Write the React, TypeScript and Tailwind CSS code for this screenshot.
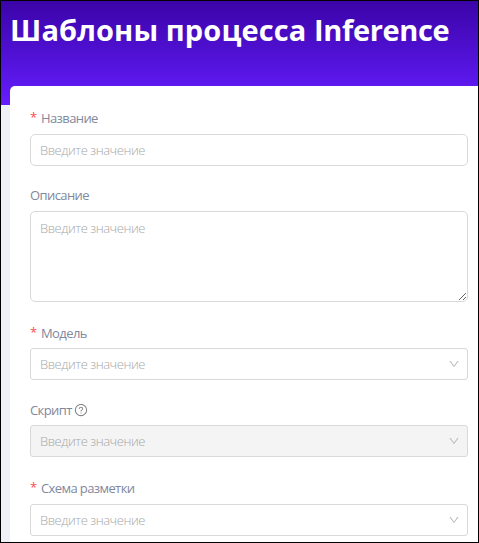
import type { ReactNode } from 'react';
import { AiOutlineDown, AiOutlineQuestionCircle } from 'react-icons/ai';

const PLACEHOLDER = 'Введите значение';

function Label({ text, required, icon }: { text: string; required?: boolean; icon?: ReactNode }) {
  return (
    <div className="flex h-8 items-center pt-[2px] text-[13px] tracking-[-0.6px] text-[#7f889c]">
      {required && <span className="mr-1 mb-[2px] w-[7px] text-[13px] text-[#ff4d4f]">*</span>}
      <span>{text}</span>
      {icon}
    </div>
  );
}

function Select({ disabled }: { disabled?: boolean }) {
  return (
    <div
      className={`flex h-8 items-center justify-between rounded-[3px] border border-[#d9d9d9] pt-px pr-[7px] pl-[9px] text-[13px] font-light tracking-[-0.45px] text-[#a8a8a8] ${
        disabled ? 'bg-[#f4f4f4]' : 'bg-white'
      }`}
    >
      <span>{PLACEHOLDER}</span>
      <AiOutlineDown className="mb-px size-3 text-[#b8b8b8]" />
    </div>
  );
}

export default function App() {
  return (
    <div className="flex h-[543px] w-[479px] flex-col overflow-hidden border border-black bg-[#f0f1f7] font-['Open_Sans','Noto_Sans',sans-serif]">
      <header className="h-[104px] shrink-0 bg-linear-to-b from-[#3b04a8] to-[#651dff] pt-[9px] pl-[9px]">
        <h1 className="text-[29px] leading-10 font-bold whitespace-nowrap text-white">
          <span className="tracking-[0.12px]">Шаблоны процесса </span>
          <span className="tracking-[-0.35px]">Inference</span>
        </h1>
      </header>
      <main className="relative -mt-[19px] ml-[9px] h-[480px] shrink-0 rounded-tl-[5px] bg-white pt-4 pr-[10px] pl-5">
        <section>
          <Label text="Название" required />
          <input
            className="block h-8 w-full rounded-[5px] border border-[#d9d9d9] px-[9px] text-[13px] font-light tracking-[-0.45px] outline-none placeholder:text-[#a8a8a8]"
            placeholder={PLACEHOLDER}
          />
        </section>
        <section className="mt-[13px]">
          <Label text="Описание" />
          <textarea
            className="block h-[91px] w-full rounded-[5px] border border-[#d9d9d9] px-[9px] py-[5px] text-[13px] leading-[22px] font-light tracking-[-0.45px] outline-none placeholder:text-[#a8a8a8]"
            placeholder={PLACEHOLDER}
          />
        </section>
        <section className="mt-[15px]">
          <Label text="Модель" required />
          <div className="-mt-px">
            <Select />
          </div>
        </section>
        <section className="mt-[14px]">
          <Label
            text="Скрипт"
            icon={<AiOutlineQuestionCircle className="mb-[3px] ml-[2px] size-[14px] text-[#858585]" />}
          />
          <div className="-mt-px">
            <Select disabled />
          </div>
        </section>
        <section className="mt-[15px]">
          <Label text="Схема разметки" required />
          <Select />
        </section>
      </main>
    </div>
  );
}
